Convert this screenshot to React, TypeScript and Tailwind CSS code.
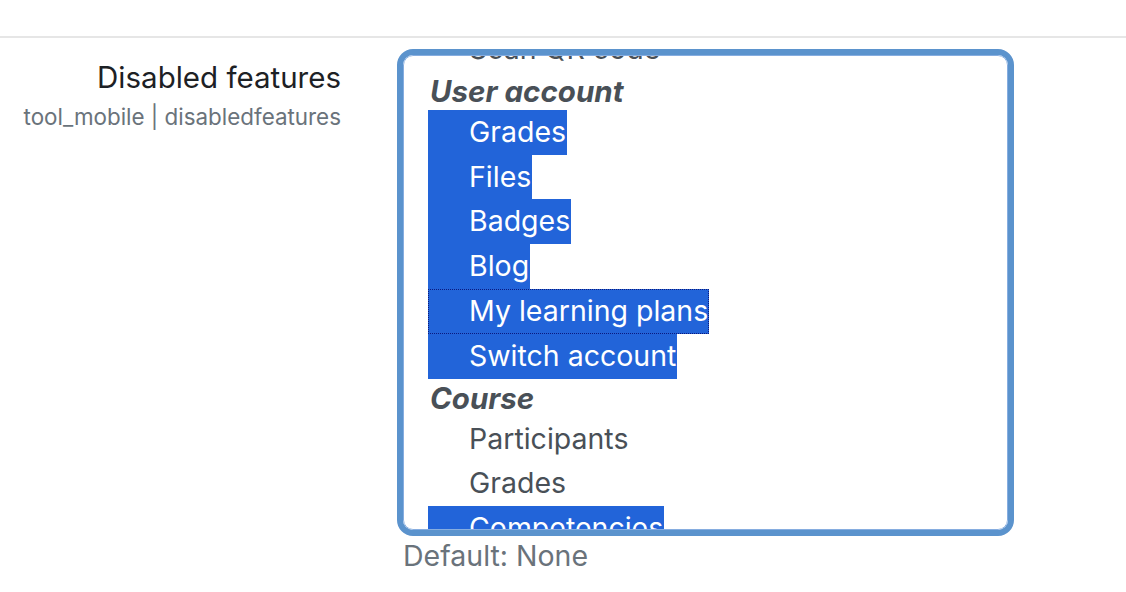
import React from 'react';

type Item =
  | { kind: 'group'; label: string }
  | { kind: 'option'; label: string; selected?: boolean; focused?: boolean };

const items: Item[] = [
  { kind: 'option', label: 'Scan QR code' },
  { kind: 'group', label: 'User account' },
  { kind: 'option', label: 'Grades', selected: true },
  { kind: 'option', label: 'Files', selected: true },
  { kind: 'option', label: 'Badges', selected: true },
  { kind: 'option', label: 'Blog', selected: true },
  { kind: 'option', label: 'My learning plans', selected: true, focused: true },
  { kind: 'option', label: 'Switch account', selected: true },
  { kind: 'group', label: 'Course' },
  { kind: 'option', label: 'Participants' },
  { kind: 'option', label: 'Grades' },
  { kind: 'option', label: 'Competencies', selected: true },
];

export default function App() {
  return (
    <div className="w-[1126px] h-[592px] bg-white overflow-hidden font-['Inter',_'Noto_Sans',sans-serif]">
      <div className="h-[36px]" />
      <div className="h-[2px] bg-[#e6e6e6]" />
      <div className="flex gap-[56px] pt-[11px]">
        <div className="w-[341px] shrink-0 text-right">
          <div className="text-[29.5px] leading-[40px] text-[#1d2125] pt-[8px]">Disabled features</div>
          <div className="mt-[5px] text-[22.4px] leading-[30px] text-[#6a737b]">tool_mobile | disabledfeatures</div>
        </div>
        <div className="flex flex-col">
          <div className="w-[617px] h-[487px] rounded-[16px] border-[6px] border-[#5b93cd] bg-white overflow-hidden">
            <div className="h-full rounded-[10px] border border-[#86ade0] overflow-hidden pl-[24px]">
              <div className="-mt-[29px] flex flex-col items-start">
                {items.map((it, i) =>
                  it.kind === 'group' ? (
                    <div
                      key={i}
                      className="h-[38px] leading-[38px] pl-[2px] text-[29.5px] font-bold italic text-[#495057] whitespace-nowrap"
                    >
                      {it.label}
                    </div>
                  ) : (
                    <div
                      key={i}
                      className={
                        'h-[44.8px] leading-[44.8px] pl-[41px] pr-[1px] text-[28.5px] whitespace-nowrap ' +
                        (it.selected ? 'bg-[#2264d9] text-white ' : 'text-[#495057] ') +
                        (it.focused ? 'outline-1 outline-dotted outline-[#0b1a7e] -outline-offset-1' : '')
                      }
                    >
                      {it.label}
                    </div>
                  )
                )}
              </div>
            </div>
          </div>
          <div className="pl-[6px] pt-[4px] text-[28.5px] leading-[32px] text-[#6a737b] whitespace-nowrap">Default: None</div>
        </div>
      </div>
    </div>
  );
}
